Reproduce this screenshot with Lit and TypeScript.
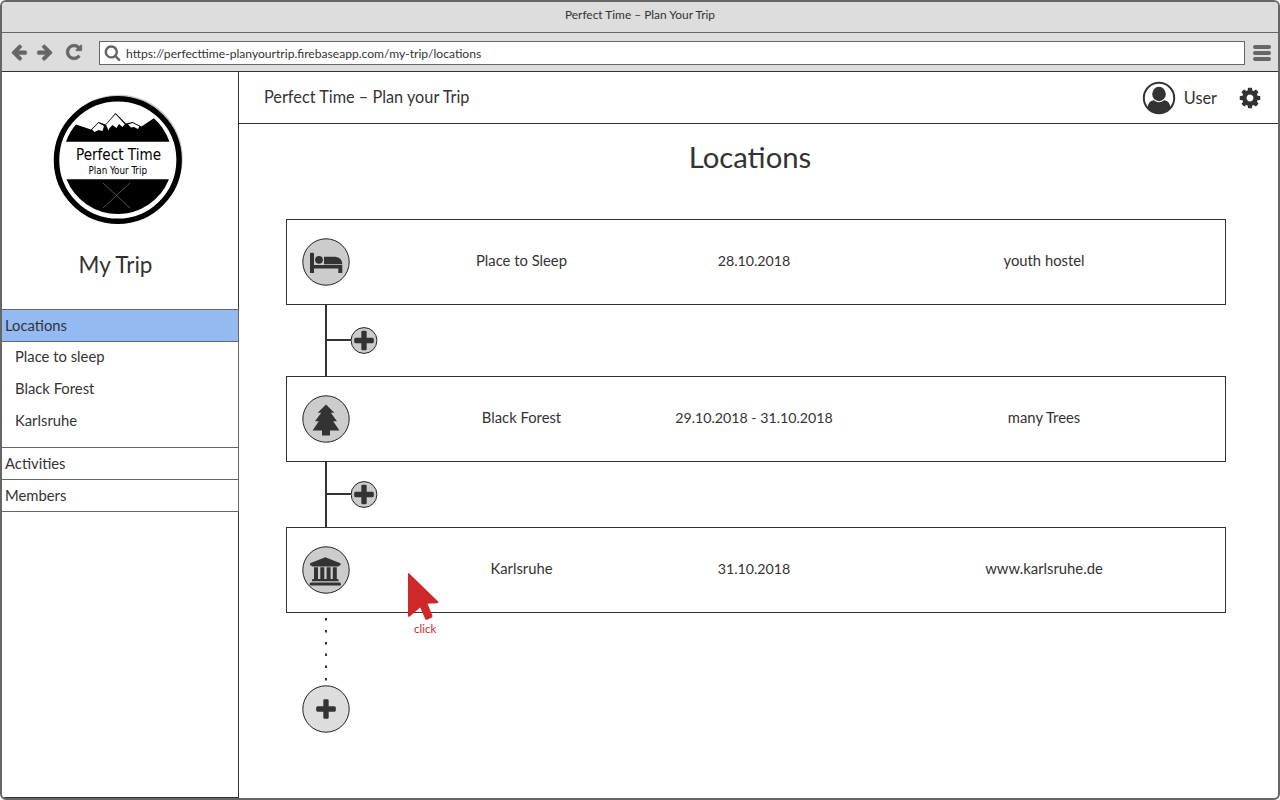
import { LitElement, html, css, svg } from "lit";
import { customElement, property } from "lit/decorators.js";

const icons: Record<string, unknown> = {
  left: svg`<path d="M1664 896v128q0 53-32.5 90.5t-84.5 37.5h-704l293 294q38 36 38 90t-38 90l-75 76q-37 37-90 37-52 0-91-37l-651-652q-37-37-37-90 0-52 37-91l651-650q38-38 91-38 52 0 90 38l75 74q38 38 38 91t-38 91l-293 293h704q52 0 84.5 37.5t32.5 90.5z"/>`,
  right: svg`<path d="M1600 960q0 54-37 91l-651 651q-39 37-91 37-51 0-90-37l-75-75q-38-38-38-91t38-91l293-293h-704q-52 0-84.5-37.5t-32.5-90.5v-128q0-53 32.5-90.5t84.5-37.5h704l-293-294q-38-36-38-90t38-90l75-75q38-38 90-38 53 0 91 38l651 651q37 35 37 90z"/>`,
  reload: svg`<path d="M1664 256v448q0 26-19 45t-45 19h-448q-42 0-59-40-17-39 14-69l138-138q-148-137-349-137-104 0-198.5 40.5t-163.5 109.5-109.5 163.5-40.5 198.5 40.5 198.5 109.5 163.5 163.5 109.5 198.5 40.5q119 0 225-52t179-147q7-10 23-12 15 0 25 9l137 138q9 8 9.500 20.500t-7.500 22.500q-109 132-264 204.500t-327 72.500q-156 0-298-61t-245-164-164-245-61-298 61-298 164-245 245-164 298-61q147 0 284.500 55.500t244.500 156.500l130-129q29-31 70-14 39 17 39 59z"/>`,
  search: svg`<path d="M1216 832q0-185-131.500-316.500t-316.500-131.500-316.500 131.500-131.500 316.500 131.500 316.500 316.500 131.500 316.500-131.500 131.500-316.500zm512 832q0 52-38 90t-90 38q-54 0-90-38l-343-342q-179 124-399 124-143 0-273.500-55.500t-225-150-150-225-55.500-273.500 55.500-273.500 150-225 225-150 273.500-55.500 273.500 55.500 225 150 150 225 55.500 273.500q0 220-124 399l343 343q37 37 37 90z"/>`,
  cog: svg`<path d="M1152 896q0-106-75-181t-181-75-181 75-75 181 75 181 181 75 181-75 75-181zm512-109v222q0 12-8 23t-20 13l-185 28q-19 54-39 91 35 50 107 138 10 12 10 25t-9 23q-27 37-99 108t-94 71q-12 0-26-9l-138-108q-44 23-91 38-16 136-29 186-7 28-36 28h-222q-14 0-24.5-8.5t-11.5-21.5l-28-184q-49-16-90-37l-141 107q-10 9-25 9-14 0-25-11-126-114-165-168-7-10-7-23 0-12 8-23 15-21 51-66.5t54-70.5q-27-50-41-99l-183-27q-13-2-21-12.5t-8-23.5v-222q0-12 8-23t19-13l186-28q14-46 39-92-40-57-107-138-10-12-10-24 0-10 9-23 26-36 98.5-107.5t94.5-71.5q13 0 26 10l138 107q44-23 91-38 16-136 29-186 7-28 36-28h222q14 0 24.5 8.5t11.5 21.5l28 184q49 16 90 37l142-107q9-9 24-9 13 0 25 10 129 119 165 170 7 8 7 22 0 12-8 23-15 21-51 66.5t-54 70.5q26 50 41 98l183 28q13 2 21 12.5t8 23.5z"/>`,
  plus: svg`<path d="M1600 736v192q0 40-28 68t-68 28h-416v416q0 40-28 68t-68 28h-192q-40 0-68-28t-28-68v-416h-416q-40 0-68-28t-28-68v-192q0-40 28-68t68-28h416v-416q0-40 28-68t68-28h192q40 0 68 28t28 68v416h416q40 0 68 28t28 68z"/>`,
};

const glyph = (name: string, cls: string) =>
  html`<svg class=${cls} viewBox="0 0 1792 1792" fill="currentColor" stroke="currentColor" aria-hidden="true">${icons[name]}</svg>`;

/* Stop icons share a 48px box centred on the badge. */
const stopIcons: Record<string, unknown> = {
  bed: svg`<path d="M9 14.700h1.700q1.300 0 1.300 1.300v11h28.300v8h-4v-4.500H12V35H8V15.700q0-1 1-1z"/><circle cx="17" cy="21.800" r="3.900"/><path d="M22 18.700h11q7.300.6 7.300 7.600H22z"/>`,
  tree: svg`<path d="M24 9.500l8.300 8.300h-3.500l6.200 8.500h-3.800l6.200 9.200H28v5h-8v-5H10.600l6.200-9.200H13l6.200-8.500h-3.500z"/>`,
  bank: svg`<path d="M23.300 11.300L38.500 17.200v2.300h-1.300q-.3.900-1.200.9H10.600q-.9 0-1.200-.9H8.100v-2.300zM12 21.200h4v11.900h2.300V21.200h4v11.900h2.300V21.200h4v11.900h2.200V21.200h4v11.900h.8q1 0 1 1.100v1H10v-1q0-1.100 1-1.100h1zM9 36.600h28.600q1.300 0 1.300 1.300v1.500H7.700v-1.500q0-1.300 1.300-1.300z"/>`,
};

interface Stop {
  icon: string;
  name: string;
  date: string;
  note: string;
}

@customElement("browser-bar")
class BrowserBar extends LitElement {
  static styles = css`
    :host { display: block; background: #ddd; color: #333; }
    .title { height: 31px; box-sizing: border-box; border-bottom: 1px solid #666; text-align: center;
      font-size: 11.900px; line-height: 25px; }
    .tools { display: flex; align-items: center; height: 39px; box-sizing: border-box; color: #666;
      border-bottom: 1px solid #333; padding: 0 7px 0 8px; }
    .nav { width: 18px; height: 18px; margin-right: 7.500px; stroke-width: 50; stroke-linejoin: round; }
    .reload { width: 18px; height: 18px; margin: 0 16px 0 4px; stroke-width: 80; }
    .address { flex: 1; height: 24px; box-sizing: border-box; border: 1px solid #666; background: #fff;
      display: flex; align-items: center; padding: 0 4px; font-size: 12.100px; color: #333; margin-top: 2px; }
    .find { width: 17px; height: 17px; color: #666; margin: 0 5px 2px 0; }
    .menu { display: grid; gap: 2px; margin: 1px 0 0 8px; width: 18px; }
    .bar { height: 4px; border-radius: 2px; background: #666; }
  `;
  render() {
    return html`
      <div class="title">Perfect Time – Plan Your Trip</div>
      <div class="tools">
        ${glyph("left", "nav")}${glyph("right", "nav")}${glyph("reload", "reload")}
        <div class="address">
          ${glyph("search", "find")}
          <span class="url">https://perfecttime-planyourtrip.firebaseapp.com/my-trip/locations</span>
        </div>
        <div class="menu"><div class="bar"></div><div class="bar"></div><div class="bar"></div></div>
      </div>`;
  }
}

@customElement("side-nav")
class SideNav extends LitElement {
  static styles = css`
    :host { display: flex; flex-direction: column; width: 237px; box-sizing: border-box; border-right: 1px solid #333;
      border-bottom: 1px solid #333; color: #333; }
    .logo { display: block; width: 136px; height: 136px; margin: 20px 0 0 48px; }
    .main { font: 16.500px "DejaVu Sans Condensed", "DejaVu Sans", sans-serif; }
    .sub { font: 10.300px "DejaVu Sans Condensed", "DejaVu Sans", sans-serif; }
    .trip { font-size: 22.500px; line-height: 30px; text-align: center; margin: 22px 9px 29px 0; }
    .row { height: 32px; box-sizing: border-box; border-top: 1px solid #666; border-right: 1px solid #666;
      padding-left: 3px; font-size: 14.800px; line-height: 30px; margin-right: -1px; }
    .active { background: #94baf3; }
    .places { border-top: 1px solid #666; border-right: 1px solid #666; margin-right: -1px; height: 105px;
      padding-left: 13px; font-size: 14.800px; box-sizing: border-box; height: 106px; margin-bottom: 0; }
    .place { height: 32px; line-height: 29px; }
    .last { border-bottom: 1px solid #666; height: 33px; }
  `;
  render() {
    return html`
      <svg class="logo" viewBox="50 92 136 136" role="img">
        <circle cx="119" cy="158.500" r="63.800" fill="#c8c8c8"/>
        <circle cx="117.800" cy="160" r="61.300" fill="#fff" stroke="#000" stroke-width="5.500"/>
        <path d="M66 141.700Q70 131 76 124.500L91 129.500 98.500 122 105.500 124.500 115.500 113 126 123.500 132.500 122 141.500 126.500 153.800 118.300Q164 127 169.500 141.700z"/>
        <path d="M106 124.700l9.500-10.500 9.300 10-2.300 2.800-3.500-3-2.500 4-4-3-3 3-1 2.500-1.500-3.500zM92 129.500l6.500-6.500 5.500 3-1.500 5-4-1-4 2zM128 124.500l4.500-1.500 7 3.500-1.500 2.500-4-2-3 .5z" fill="#fff"/>
        <path d="M66.500 179.300H169A55.200 55.200 0 0 1 66.500 179.300z"/>
        <path d="M103 183l27 25M130 183l-27 25" stroke="#777" stroke-width=".7"/>
        <text class="main" x="76" y="159.500" textLength="85" lengthAdjust="spacingAndGlyphs">Perfect Time</text>
        <text class="sub" x="88.500" y="174" textLength="58.500" lengthAdjust="spacingAndGlyphs">Plan Your Trip</text>
      </svg>
      <div class="trip">My Trip</div>
      <div class="row active">Locations</div>
      <div class="places">
        <div class="place">Place to sleep</div>
        <div class="place">Black Forest</div>
        <div class="place">Karlsruhe</div>
      </div>
      <div class="row">Activities</div>
      <div class="row last">Members</div>`;
  }
}

@customElement("stop-card")
class StopCard extends LitElement {
  @property({ attribute: false }) stop!: Stop;
  static styles = css`
    :host { display: grid; grid-template-columns: 48px 236px 336px 244px; align-items: center;
      height: 86px; width: 940px; box-sizing: border-box; border: 1px solid #333; padding-left: 15px; color: #333;
      font-size: 14.800px; text-align: center; }
    .badge { width: 48px; height: 48px; display: block; }
    .text { padding-bottom: 4px; white-space: nowrap; }
    .name { padding-left: 107px; }
    .date { font-size: 14.200px; padding-bottom: 3px; }
  `;
  render() {
    return html`
      <svg class="badge" viewBox="0 0 48 48" fill="#333">
        <circle cx="24" cy="24" r="23.200" fill="#ccc" stroke="#222" stroke-width="1"/>
        ${stopIcons[this.stop.icon]}
      </svg>
      <div class="text name">${this.stop.name}</div>
      <div class="text date">${this.stop.date}</div>
      <div class="text">${this.stop.note}</div>`;
  }
}

@customElement("app-root")
class AppRoot extends LitElement {
  static styles = css`
    :host { display: flex; flex-direction: column; width: 1280px; height: 800px; box-sizing: border-box;
      border: 2px solid #666; border-radius: 6px; overflow: hidden; background: #fff; color: #333;
      font-family: Lato, sans-serif; position: relative; }
    .body { flex: 1; display: flex; min-height: 0; }
    .page { flex: 1; display: flex; flex-direction: column; }
    .head { height: 52px; box-sizing: border-box; border-bottom: 1px solid #333; display: flex; align-items: center;
      padding: 0 16px 0 25px; font-size: 16.300px; }
    .brand { flex: 1; padding-bottom: 3px; }
    .avatar { width: 34px; height: 34px; margin-right: 8px; }
    .user { margin-right: 21px; padding-bottom: 1px; }
    .cog { width: 24px; height: 24px; }
    .heading { margin: 14px 0 0; padding-right: 17px; height: 40px; line-height: 37px; font-size: 29.300px;
      font-weight: 400; text-align: center; }
    .route { display: flex; flex-direction: column; margin: 41px 0 0 47px; }
    .link { display: flex; align-items: center; margin-left: 39px; border-left: 2px solid #333; }
    .first { height: 71px; }
    .second { height: 65px; }
    .branch { width: 24px; height: 2px; background: #333; margin-bottom: 1px; }
    .add { display: block; width: 27px; height: 27px; margin-left: -0.500px; }
    .dots { display: block; width: 2px; height: 66px; margin: 5px 0 1px 39px; }
    .end { display: block; width: 48px; height: 48px; margin-left: 16px; }
    .pointer { position: absolute; left: 402px; top: 567px; width: 40px; height: 70px; color: #cf2828; }
    .arrow { display: block; width: 40px; height: 54px; }
    .click { display: block; font-size: 11.500px; line-height: 14px; margin: -1px 0 0 10px; }
  `;

  stops: Stop[] = [
    { icon: "bed", name: "Place to Sleep", date: "28.10.2018", note: "youth hostel" },
    { icon: "tree", name: "Black Forest", date: "29.10.2018 - 31.10.2018", note: "many Trees" },
    { icon: "bank", name: "Karlsruhe", date: "31.10.2018", note: "www.karlsruhe.de" },
  ];

  link(cls: string) {
    return html`<div class="link ${cls}">
      <div class="branch"></div>
      <svg class="add" viewBox="0 0 27 27" fill="#333">
        <circle cx="13" cy="13.500" r="12.900" fill="#ccc" stroke="#222"/>
        <svg x="0.500" y="1" width="25" height="25" viewBox="0 0 1792 1792"><g transform="translate(0 64)">${icons.plus}</g></svg>
      </svg>
    </div>`;
  }

  render() {
    return html`
      <browser-bar></browser-bar>
      <div class="body">
        <side-nav></side-nav>
        <div class="page">
          <div class="head">
            <div class="brand">Perfect Time – Plan your Trip</div>
            <svg class="avatar" viewBox="0 0 34 34" fill="#333">
              <circle cx="17" cy="17" r="15.200" fill="#fff" stroke="#333" stroke-width="2"/>
              <ellipse cx="17" cy="13" rx="6.800" ry="7.200"/>
              <path d="M5.500 27Q6 20 11.800 19.200 17 23.500 22.200 19.200 28 20 28.500 27A15 15 0 0 1 5.500 27z"/>
            </svg>
            <div class="user">User</div>
            ${glyph("cog", "cog")}
          </div>
          <h1 class="heading">Locations</h1>
          <div class="route">
            <stop-card .stop=${this.stops[0]}></stop-card>
            ${this.link("first")}
            <stop-card .stop=${this.stops[1]}></stop-card>
            ${this.link("second")}
            <stop-card .stop=${this.stops[2]}></stop-card>
            <svg class="dots" viewBox="0 0 2 66" fill="#333">
              ${[0, 12, 24, 35.5, 47.5, 60].map((y) => svg`<rect y=${y} width="2" height="2.500"/>`)}
            </svg>
            <svg class="end" viewBox="0 0 48 48" fill="#333">
              <circle cx="24" cy="24" r="23.200" fill="#ddd" stroke="#222"/>
              <svg x="11.500" y="11.500" width="25" height="25" viewBox="0 0 1792 1792"><g transform="translate(0 64)">${icons.plus}</g></svg>
            </svg>
          </div>
        </div>
      </div>
      <div class="pointer">
        <svg class="arrow" viewBox="404 569 40 54" fill="currentColor">
          <path d="M408 574q0-1.500 1.300-.5L438.300 601.700q.8 1.300-.8 1.500l-10 .5 5 12q.3 1.200-.8 1.800l-4.500 2.200q-1.400.4-2-.8l-5-11.500-10.500 9.200q-1.700.9-1.700-.8z"/>
        </svg>
        <span class="click">click</span>
      </div>`;
  }
}
